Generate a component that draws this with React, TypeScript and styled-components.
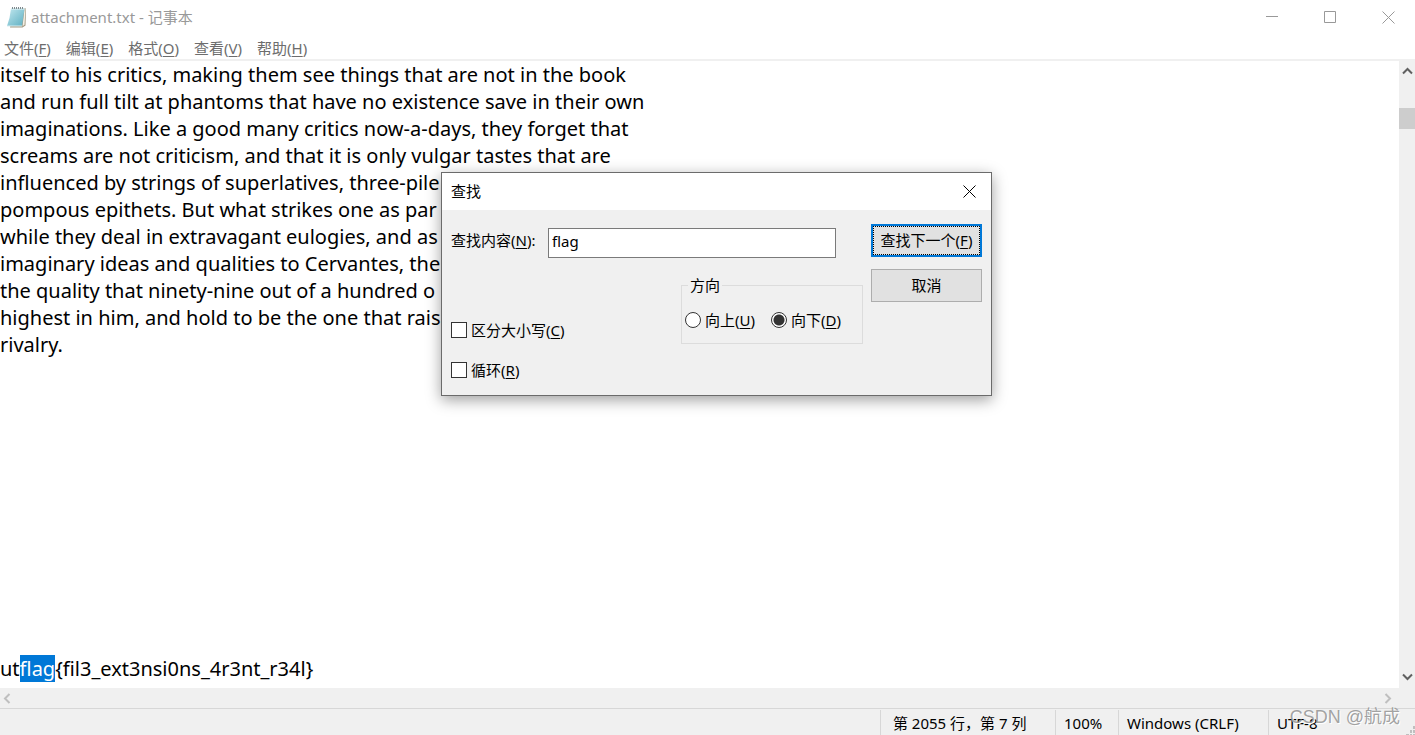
import React from 'react';
import styled, { createGlobalStyle, css } from 'styled-components';

const GlobalStyle = createGlobalStyle`
  * { box-sizing: border-box; }
  html, body, #root { height: 100%; margin: 0; }
  body {
    background: #fff;
    color: #000;
    font-family: "Noto Sans", "Noto Sans CJK SC", sans-serif;
    font-size: 15px;
    line-height: 20px;
    overflow: hidden;
  }
  button, input { font: inherit; color: inherit; }
`;

const Window = styled.div`
  position: relative;
  display: flex;
  flex-direction: column;
  height: 100%;
`;

const TitleBar = styled.header`
  display: flex;
  align-items: center;
  height: 34px;
  padding-left: 7px;
  color: #999;
`;

const Title = styled.h1`
  flex: 1;
  margin: 0 0 0 4px;
  font-size: 15px;
  font-weight: 400;
`;

const CaptionButton = styled.button`
  display: flex;
  align-items: center;
  justify-content: flex-end;
  width: 58px;
  height: 34px;
  padding: 0 20px 0 0;
  border: 0;
  background: transparent;
  color: #999;
`;

const MenuBar = styled.nav`
  display: flex;
  align-items: center;
  gap: 15px;
  height: 25px;
  padding: 2px 4px 0;
`;

const MenuItem = styled.button`
  padding: 0;
  border: 0;
  background: transparent;
  color: #6d6d6d;
  white-space: nowrap;
`;

const Key = styled.span`
  text-decoration: underline;
  text-decoration-thickness: 1px;
  text-underline-offset: 2px;
`;

const Workspace = styled.main`
  display: flex;
  flex: 1;
  min-height: 0;
  border-top: 2px solid #f0f0f0;
`;

const Document = styled.div`
  display: flex;
  flex: 1;
  flex-direction: column;
  align-items: flex-start;
  min-width: 0;
  overflow: hidden;
  font-size: 20px;
  line-height: 27px;
`;

const Line = styled.div`
  flex: none;
  height: 27px;
  white-space: pre;
`;

const Selection = styled.mark`
  display: inline-block;
  background: #0078d7;
  color: #fff;
`;

const VerticalScroll = styled.div`
  display: flex;
  flex-direction: column;
  align-items: center;
  width: 16px;
  padding-bottom: 2px;
  background: #f0f0f0;
`;

const ArrowButton = styled.button<{ $faint?: boolean }>`
  display: flex;
  align-items: center;
  justify-content: center;
  width: 14px;
  height: 20px;
  padding: 0;
  border: 0;
  background: transparent;
  color: ${(p) => (p.$faint ? '#bfbfbf' : '#606060')};
`;

const Track = styled.div`
  flex: 1;
  width: 100%;
  padding-top: 27px;
`;

const Thumb = styled.div`
  height: 21px;
  background: #cdcdcd;
`;

const HorizontalScroll = styled.div`
  display: flex;
  justify-content: space-between;
  height: 20px;
  padding: 0 21px 2px 0;
  background: #f0f0f0;
`;

const StatusBar = styled.footer`
  position: relative;
  display: flex;
  justify-content: flex-end;
  height: 27px;
  padding-top: 1px;
  border-top: 1px solid #d7d7d7;
  background: #f0f0f0;
`;

const StatusCell = styled.div<{ $width: number }>`
  width: ${(p) => p.$width}px;
  padding: 3px 0 0 8px;
  border-left: 1px solid #d7d7d7;
  white-space: nowrap;
`;

const Grip = styled.svg`
  position: absolute;
  right: 0;
  bottom: 0;
`;

const Watermark = styled.div`
  position: absolute;
  right: 15px;
  bottom: 5px;
  color: rgba(140, 140, 140, 0.8);
  font-family: "Liberation Sans", "Noto Sans CJK SC", sans-serif;
  font-size: 18px;
  line-height: 26px;
  text-shadow: 1px 1px 0 #fff;
  white-space: nowrap;
`;

const Dialog = styled.section`
  position: absolute;
  left: 441px;
  top: 172px;
  width: 551px;
  border: 1px solid #6b6b6b;
  background: #f0f0f0;
  box-shadow: 0 4px 14px rgba(0, 0, 0, 0.38);
`;

const DialogHeader = styled.header`
  display: flex;
  align-items: center;
  justify-content: space-between;
  height: 37px;
  padding: 0 9px 1px;
  background: #fff;
`;

const DialogTitle = styled.h2`
  margin: 0;
  font-size: 15px;
  font-weight: 400;
`;

const CloseButton = styled.button`
  display: flex;
  align-items: center;
  justify-content: center;
  width: 25px;
  height: 24px;
  padding: 0;
  border: 0;
  background: transparent;
`;

const DialogBody = styled.form`
  display: flex;
  gap: 8px;
  height: 185px;
  padding: 14px 9px 0;
`;

const Fields = styled.div`
  flex: 1;
  padding-top: 4px;
`;

const SearchRow = styled.div`
  display: flex;
  justify-content: space-between;
  padding-right: 27px;
`;

const SearchLabel = styled.label`
  padding-top: 2px;
  white-space: nowrap;
`;

const SearchInput = styled.input`
  width: 288px;
  height: 30px;
  padding: 0 3px 4px;
  border: 1px solid #7a7a7a;
  border-radius: 0;
  background: #fff;
  outline: 0;
`;

const OptionsRow = styled.div`
  display: flex;
  align-items: flex-start;
  justify-content: space-between;
  padding-top: 17px;
`;

const Checks = styled.div`
  display: flex;
  flex-direction: column;
  gap: 20px;
  padding-top: 45px;
`;

const Option = styled.label`
  display: flex;
  align-items: center;
  gap: 4px;
  height: 20px;
  white-space: nowrap;
`;

const boxBase = css`
  appearance: none;
  width: 16px;
  height: 16px;
  margin: 0;
  border: 1px solid #333;
  background: #fff;
`;

const CheckInput = styled.input`
  ${boxBase}
`;

const RadioInput = styled.input`
  ${boxBase}
  border-radius: 50%;
  &:checked {
    background: radial-gradient(circle, #333 5px, #fff 6px);
  }
`;

const Direction = styled.fieldset`
  display: flex;
  gap: 16px;
  width: 182px;
  height: 69px;
  margin: 0;
  padding: 15px 3px 0;
  border: 1px solid #dcdcdc;
`;

const Legend = styled.legend`
  margin-left: 3px;
  padding: 0 2px;
`;

const Actions = styled.div`
  display: flex;
  flex-direction: column;
  gap: 12px;
  width: 111px;
`;

const ActionButton = styled.button<{ $primary?: boolean }>`
  height: 33px;
  padding: 0 0 2px;
  border: ${(p) => (p.$primary ? '2px solid #0078d7' : '1px solid #adadad')};
  background: #e1e1e1;
  outline: ${(p) => (p.$primary ? '1px dotted #000' : '0')};
  outline-offset: -3px;
  white-space: nowrap;
`;

const LINES = [
  'itself to his critics, making them see things that are not in the book',
  'and run full tilt at phantoms that have no existence save in their own',
  'imaginations. Like a good many critics now-a-days, they forget that',
  'screams are not criticism, and that it is only vulgar tastes that are',
  'influenced by strings of superlatives, three-pile',
  'pompous epithets. But what strikes one as par',
  'while they deal in extravagant eulogies, and as',
  'imaginary ideas and qualities to Cervantes, the',
  'the quality that ninety-nine out of a hundred o',
  'highest in him, and hold to be the one that rais',
  'rivalry.',
  ...Array<string>(11).fill(''),
];

const MENUS: [string, string][] = [
  ['文件', 'F'],
  ['编辑', 'E'],
  ['格式', 'O'],
  ['查看', 'V'],
  ['帮助', 'H'],
];

const Mnemonic = ({ text, k }: { text: string; k: string }) => (
  <span>
    {text}(<Key>{k}</Key>)
  </span>
);

const NotepadIcon = () => (
  <svg width="20" height="22" viewBox="0 0 20 22" aria-hidden="true">
    <defs>
      <linearGradient id="page" x1="0" y1="0" x2="1" y2="1">
        <stop offset="0" stopColor="#c3e8ef" />
        <stop offset="0.5" stopColor="#8fcbd8" />
        <stop offset="1" stopColor="#5fb0c2" />
      </linearGradient>
    </defs>
    <path d="M5 2.500h14l-.5 17-3 2H3z" fill="#a39a84" />
    <path d="M17.500 3h1l-1 15.500-2 2z" fill="#f4f0e4" />
    <path d="M4 2.500h13.500L15 20H0L2.500 12z" fill="url(#page)" />
    <path d="M0 20h15" stroke="#d9eef2" />
    <path d="M4 3h13.500" stroke="#e8f4f6" />
    <path
      d="M5.500 1v2M7.500 1v2M9.500 1v2M11.500 1v2M13.500 1v2M15.500 1v2"
      stroke="#7d8a8f"
    />
  </svg>
);

const Cross = () => (
  <svg width="13" height="13" viewBox="0 0 13 13" aria-hidden="true">
    <path d="M.5.5l12 12M12.500.5l-12 12" stroke="currentColor" fill="none" />
  </svg>
);

const ROTATION = { up: 0, right: 90, down: 180, left: 270 };

const Chevron = ({ to }: { to: keyof typeof ROTATION }) => (
  <svg width="11" height="11" viewBox="0 0 11 11" aria-hidden="true">
    <path
      d="M1 7.500l4.500-4.500 4.500 4.500"
      transform={`rotate(${ROTATION[to]} 5.5 5.5)`}
      stroke="currentColor"
      strokeWidth="2"
      fill="none"
    />
  </svg>
);

export default function App() {
  return (
    <>
      <GlobalStyle />
      <Window>
        <TitleBar>
          <NotepadIcon />
          <Title>attachment.txt - 记事本</Title>
          <CaptionButton aria-label="最小化">
            <svg width="13" height="12" viewBox="0 0 13 12" aria-hidden="true">
              <path d="M0 5.500h12" stroke="currentColor" />
            </svg>
          </CaptionButton>
          <CaptionButton aria-label="最大化">
            <svg width="13" height="12" viewBox="0 0 13 12" aria-hidden="true">
              <path d="M.5.5h11v11H.5z" stroke="currentColor" fill="none" />
            </svg>
          </CaptionButton>
          <CaptionButton aria-label="关闭">
            <Cross />
          </CaptionButton>
        </TitleBar>
        <MenuBar>
          {MENUS.map(([text, k]) => (
            <MenuItem key={k}>
              <Mnemonic text={text} k={k} />
            </MenuItem>
          ))}
        </MenuBar>
        <Workspace>
          <Document>
            {LINES.map((line, i) => (
              <Line key={i}>{line}</Line>
            ))}
            <Line>
              ut<Selection>flag</Selection>
              {'{fil3_ext3nsi0ns_4r3nt_r34l}'}
            </Line>
          </Document>
          <VerticalScroll>
            <ArrowButton aria-label="向上滚动">
              <Chevron to="up" />
            </ArrowButton>
            <Track>
              <Thumb />
            </Track>
            <ArrowButton aria-label="向下滚动">
              <Chevron to="down" />
            </ArrowButton>
          </VerticalScroll>
        </Workspace>
        <HorizontalScroll>
          <ArrowButton $faint aria-label="向左滚动">
            <Chevron to="left" />
          </ArrowButton>
          <ArrowButton $faint aria-label="向右滚动">
            <Chevron to="right" />
          </ArrowButton>
        </HorizontalScroll>
        <StatusBar>
          <StatusCell $width={175}>&nbsp;第 2055 行，第 7 列</StatusCell>
          <StatusCell $width={63}>100%</StatusCell>
          <StatusCell $width={150}>Windows (CRLF)</StatusCell>
          <StatusCell $width={147}>UTF-8</StatusCell>
          <Grip width="9" height="9" viewBox="0 0 9 9" fill="#bfbfbf" aria-hidden="true">
            <path d="M7 0h2v3H7zM4 4h2v3H4zM7 4h2v3H7zM0 8h3v1H0zM4 8h2v1H4zM7 8h2v1H7z" />
          </Grip>
          <Watermark>CSDN @航成</Watermark>
        </StatusBar>

        <Dialog role="dialog" aria-labelledby="find-title">
          <DialogHeader>
            <DialogTitle id="find-title">查找</DialogTitle>
            <CloseButton aria-label="关闭">
              <Cross />
            </CloseButton>
          </DialogHeader>
          <DialogBody onSubmit={(e) => e.preventDefault()}>
            <Fields>
              <SearchRow>
                <SearchLabel htmlFor="find-text">
                  <Mnemonic text="查找内容" k="N" />:
                </SearchLabel>
                <SearchInput id="find-text" type="text" defaultValue="flag" />
              </SearchRow>
              <OptionsRow>
                <Checks>
                  <Option>
                    <CheckInput type="checkbox" />
                    <Mnemonic text="区分大小写" k="C" />
                  </Option>
                  <Option>
                    <CheckInput type="checkbox" />
                    <Mnemonic text="循环" k="R" />
                  </Option>
                </Checks>
                <Direction>
                  <Legend>方向</Legend>
                  <Option>
                    <RadioInput type="radio" name="direction" />
                    <Mnemonic text="向上" k="U" />
                  </Option>
                  <Option>
                    <RadioInput type="radio" name="direction" defaultChecked />
                    <Mnemonic text="向下" k="D" />
                  </Option>
                </Direction>
              </OptionsRow>
            </Fields>
            <Actions>
              <ActionButton type="submit" $primary>
                <Mnemonic text="查找下一个" k="F" />
              </ActionButton>
              <ActionButton type="button">取消</ActionButton>
            </Actions>
          </DialogBody>
        </Dialog>
      </Window>
    </>
  );
}
